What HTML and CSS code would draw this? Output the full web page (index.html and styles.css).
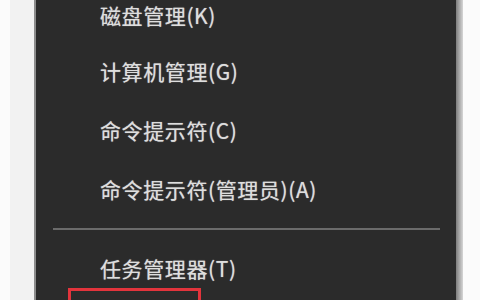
FILE: index.html
```html
<!DOCTYPE html>
<html lang="zh-CN">
<head>
    <meta charset="UTF-8">
    <meta name="viewport" content="width=device-width, initial-scale=1.0">
    <title>快捷菜单</title>
    <link rel="stylesheet" href="styles.css">
</head>
<body>
    <div class="screen">
        <div class="gutter"></div>

        <div class="menu">
            <div class="menu-list">
                <div class="menu-item">磁盘管理(K)</div>
                <div class="menu-item">计算机管理(G)</div>
                <div class="menu-item">命令提示符(C)</div>
                <div class="menu-item">命令提示符(管理员)(A)</div>
                <div class="separator"></div>
                <div class="menu-item">任务管理器(T)</div>
                <div class="highlight"></div>
            </div>
        </div>

        <div class="shadow"></div>
    </div>
</body>
</html>
```

FILE: styles.css
```css
html, body {
    margin: 0;
    padding: 0;
    height: 100%;
    overflow: hidden;
}

body {
    background: #fbfbfb;
    font-family: "Noto Sans CJK SC", "Noto Sans", sans-serif;
}

.screen {
    display: flex;
    height: 300px;
    padding-left: 10px;
}

.gutter {
    width: 24px;
    background: #f2f2f2;
}

.menu {
    width: 420px;
    background: #2b2b2b;
    border-left: 2px solid #8c8c8c;
    overflow: hidden;
}

.menu-item {
    height: 59px;
    line-height: 59px;
    padding-left: 64px;
    font-size: 21px;
    letter-spacing: 0.6px;
    color: #dedede;
    text-shadow: 0 0 1px rgba(255, 255, 255, 0.6);
    white-space: nowrap;
}

.menu-item:first-child {
    height: 30px;
    line-height: 30px;
    margin-bottom: 12px;
}

.separator {
    height: 2px;
    margin: 9px 16px 9px 17px;
    background: #6b6b6b;
}

.highlight {
    width: 127px;
    height: 30px;
    margin-top: -10px;
    margin-left: 32px;
    border: 3px solid #e2343c;
}

.shadow {
    width: 7px;
    background: linear-gradient(to right, #7d7d7d, #d6d6d6);
}
```
